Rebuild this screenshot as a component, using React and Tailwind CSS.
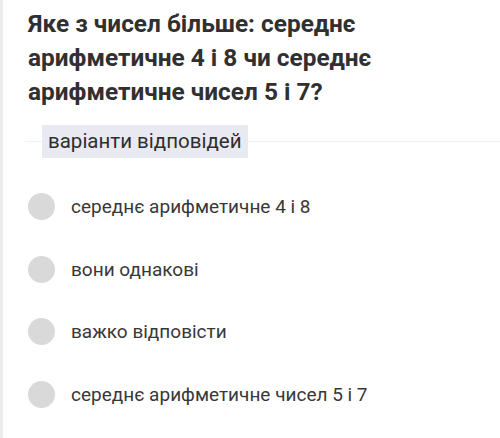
const options = [
  'середнє арифметичне 4 і 8',
  'вони однакові',
  'важко відповісти',
  'середнє арифметичне чисел 5 і 7',
]

export default function App() {
  return (
    <div
      className="w-[500px] h-[438px] bg-white border-l-[3px] border-[#ececec] overflow-hidden"
      style={{ fontFamily: 'Roboto, "Noto Sans", sans-serif' }}
    >
      {/* питання */}
      <h1 className="pl-[25px] pr-2 pt-[7px] text-[24.4px] leading-[34px] font-bold text-[#303030] whitespace-nowrap">
        Яке з чисел більше: середнє
        <br />
        арифметичне 4 і 8 чи середнє
        <br />
        арифметичне чисел 5 і 7?
      </h1>

      {/* заголовок варіантів */}
      <div className="mt-[16px] flex items-center pl-[22px]">
        <div className="w-[17px] h-px bg-[#f1f1f1]" />
        <div className="h-[33px] px-[6px] flex items-center bg-[#e9e9f2] text-[20.5px] text-[#2f2f2f] whitespace-nowrap">
          варіанти відповідей
        </div>
        <div className="flex-1 h-px bg-[#f1f1f1]" />
      </div>

      {/* варіанти */}
      <ul className="mt-[35px] pl-[25px]">
        {options.map((o) => (
          <li key={o} className="h-[62.5px] flex items-start">
            <span className="w-[27px] h-[27px] rounded-full bg-[#d9d9d9] shrink-0" />
            <span className="ml-[16px] text-[19px] leading-[27px] text-[#383838] whitespace-nowrap">{o}</span>
          </li>
        ))}
      </ul>
    </div>
  )
}
